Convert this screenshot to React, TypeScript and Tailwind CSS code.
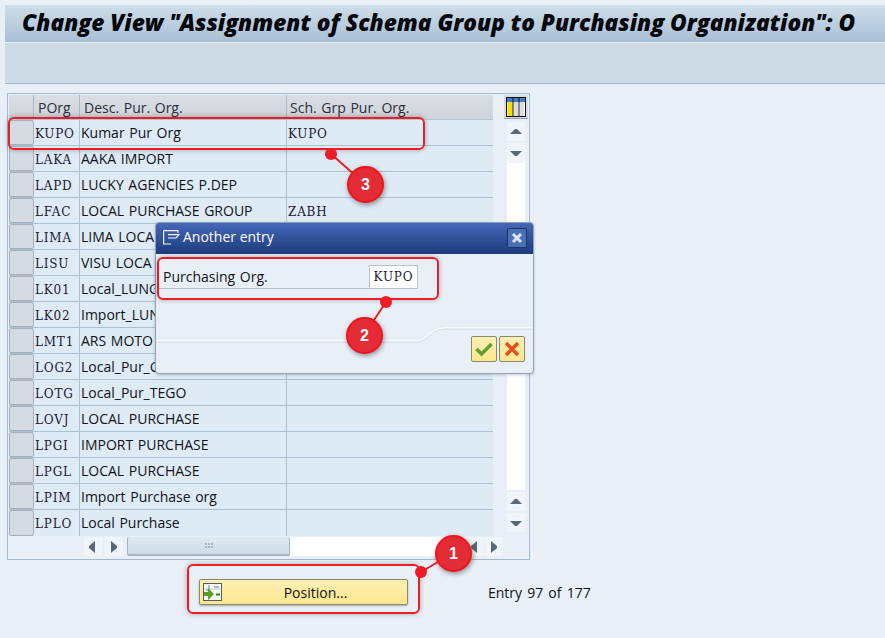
const rows = [
  ['KUPO', 'Kumar Pur Org', 'KUPO'],
  ['LAKA', 'AAKA IMPORT', ''],
  ['LAPD', 'LUCKY AGENCIES P.DEP', ''],
  ['LFAC', 'LOCAL PURCHASE GROUP', 'ZABH'],
  ['LIMA', 'LIMA LOCA', ''],
  ['LISU', 'VISU LOCA', ''],
  ['LK01', 'Local_LUNG', ''],
  ['LK02', 'Import_LUN', ''],
  ['LMT1', 'ARS MOTO', ''],
  ['LOG2', 'Local_Pur_G', ''],
  ['LOTG', 'Local_Pur_TEGO', ''],
  ['LOVJ', 'LOCAL PURCHASE', ''],
  ['LPGI', 'IMPORT PURCHASE', ''],
  ['LPGL', 'LOCAL PURCHASE', ''],
  ['LPIM', 'Import Purchase org', ''],
  ['LPLO', 'Local Purchase', ''],
];

const sans = 'font-["Open_Sans",sans-serif] text-[14px] [word-spacing:1px]';
const mono = 'font-["DejaVu_Serif",serif] text-[12px] tracking-[0.8px] text-[#1c1836]';

function ArrowBtn({ dir, className }: { dir: 'up' | 'down' | 'left' | 'right'; className: string }) {
  const pts = {
    up: '3,10 8,5 10,5 15,10',
    down: '3,6 15,6 10,11 8,11',
    left: '11,2 11,14 5,9 5,7',
    right: '6,2 6,14 12,9 12,7',
  }[dir];
  return (
    <div className={`flex items-center justify-center bg-[#f0f5fa] ${className}`}>
      <svg width="18" height="16" viewBox="0 0 18 16">
        <polygon points={pts} fill="#57687a" />
      </svg>
    </div>
  );
}

function Callout({ n, box, dot, circle }: {
  n: number;
  box: [number, number, number, number];
  dot: [number, number];
  circle: [number, number];
}) {
  return (
    <>
      <div
        className="absolute rounded-[6px] border-2 border-[#ee1c25] shadow-[0_0_5px_rgba(0,0,0,0.3)]"
        style={{ left: box[0], top: box[1], width: box[2], height: box[3] }}
      />
      <svg className="absolute left-0 top-0 pointer-events-none" width="885" height="638">
        <line x1={dot[0]} y1={dot[1]} x2={circle[0]} y2={circle[1]} stroke="#ee1c25" strokeWidth="2" />
        <circle cx={dot[0]} cy={dot[1]} r="6" fill="#ee1c25" />
      </svg>
      <div
        className="absolute flex items-center justify-center w-[37px] h-[37px] rounded-full bg-[#e32c36] border-2 border-[#f5121c] shadow-[1px_2px_5px_rgba(0,0,0,0.4)] text-white font-bold text-[16px] font-['Liberation_Sans',sans-serif]"
        style={{ left: circle[0] - 18, top: circle[1] - 18 }}
      >
        {n}
      </div>
    </>
  );
}

export default function App() {
  return (
    <div className="relative w-[885px] h-[638px] overflow-hidden bg-[#e8eff7] pl-[5px] pt-[5px] text-[#10131a]">
      {/* title + toolbar */}
      <div className="h-[38px] flex items-center pl-[17px] bg-gradient-to-b from-[#cfdde9] to-[#a8c0d5] border-b border-[#e8eff6] overflow-hidden whitespace-nowrap">
        <span className="font-['Open_Sans',sans-serif] font-extrabold italic text-[22.7px] text-[#05070c]">
          Change View "Assignment of Schema Group to Purchasing Organization": O
        </span>
      </div>
      <div className="h-[41px] bg-[#cddbe6] border-b border-[#a3b8ca]" />

      {/* table control */}
      <div className="mt-[9px] ml-[2px] w-[523px] h-[467px] border border-[#a4bacf] pl-[1px] pt-[1px] flex flex-col">
        <div className="flex h-[441px]">
          <div className="w-[484px] shrink-0">
            <div className={`flex h-[25px] bg-gradient-to-b from-[#d9dee3] to-[#cdd4da] border-b border-[#b7c4d0] text-[#2a3038] ${sans}`}>
              <div className="w-[25px] shrink-0 border-r border-[#a9b8c6]" />
              <div className="w-[46px] shrink-0 pl-[4px] pt-[2px] border-r border-[#a9b8c6]">POrg</div>
              <div className="w-[207px] shrink-0 pl-[4px] pt-[2px] border-r border-[#a9b8c6]">Desc. Pur. Org.</div>
              <div className="flex-1 pl-[3px] pt-[2px]">Sch. Grp Pur. Org.</div>
            </div>
            {rows.map(r => (
              <div key={r[0]} className="flex h-[26px] bg-[#deeaf4] border-b border-[#adc0d1] last:border-b-0">
                <div className="w-[25px] shrink-0 bg-[#d4dbe2] border border-[#a5b0ba] rounded-[2px]" />
                <div className={`w-[46px] shrink-0 pl-[1px] leading-[28px] border-r border-[#adc0d1] ${mono}`}>{r[0]}</div>
                <div className={`w-[207px] shrink-0 pl-[1px] leading-[25px] border-r border-[#adc0d1] ${sans}`}>{r[1]}</div>
                <div className={`flex-1 pl-[1px] leading-[28px] ${mono}`}>{r[2]}</div>
              </div>
            ))}
          </div>
          {/* vertical scrollbar */}
          <div className="ml-[11px] w-[24px] pb-[4px] flex flex-col items-center">
            <div className="w-[24px] h-[24px] flex items-center justify-center bg-[#d3dce4] border-b border-[#8fa0b0]">
              <svg width="20" height="20" viewBox="0 0 20 20">
                <rect x="0.5" y="0.5" width="19" height="19" fill="#fff" stroke="#111" />
                <rect x="1" y="1" width="18" height="4" fill="#3f7cc0" />
                <rect x="1.5" y="5" width="5" height="14" fill="#f5df00" />
                <rect x="8" y="5" width="4" height="14" fill="#d9dde0" />
                <rect x="14" y="5" width="4" height="14" fill="#d9dde0" />
                <path d="M7 1v18M13 1v18" stroke="#111" />
              </svg>
            </div>
            <ArrowBtn dir="up" className="mt-[3px] w-[18px] h-[19px]" />
            <ArrowBtn dir="down" className="mt-[2px] w-[18px] h-[19px]" />
            <div className="w-[18px] flex-1 mt-[1px] bg-white" />
            <ArrowBtn dir="up" className="mt-[2px] w-[18px] h-[19px]" />
            <ArrowBtn dir="down" className="mt-[2px] w-[18px] h-[19px]" />
          </div>
        </div>
        {/* horizontal scrollbar */}
        <div className="flex items-start h-[22px] pt-[1px] pl-[75px]">
          <ArrowBtn dir="left" className="w-[18px] h-[19px]" />
          <ArrowBtn dir="right" className="ml-[3px] w-[18px] h-[19px]" />
          <div className="ml-[4px] w-[163px] h-[19px] flex items-center justify-center rounded-[2px] bg-gradient-to-b from-[#dfe9f2] to-[#cfdde9] border-b-2 border-r border-l border-[#a9b4bf]">
            <div className="grid grid-cols-3 gap-[1px]">
              {[0, 1, 2, 3, 4, 5].map(i => <div key={i} className="w-[2px] h-[2px] bg-[#aab5c0]" />)}
            </div>
          </div>
          <div className="w-[176px] h-[19px] bg-white" />
          <ArrowBtn dir="left" className="w-[18px] h-[19px]" />
          <ArrowBtn dir="right" className="ml-[1px] w-[18px] h-[19px]" />
        </div>
      </div>

      {/* bottom: position button and entry count */}
      <div className="flex items-center ml-[194px] mt-[19px]">
        <div className="relative w-[209px] h-[26px] flex items-center justify-center pl-[24px] rounded-[2px] bg-gradient-to-b from-[#fdf0b4] to-[#fce68e] border border-[#8b8a6e] shadow-[0_1px_2px_rgba(0,0,0,0.3)] font-['Open_Sans',sans-serif] text-[14px]">
          <svg className="absolute left-[3px] top-[3px]" width="19" height="18" viewBox="0 0 19 18">
            <rect x="0.5" y="0.5" width="18" height="17" fill="#f4f6f4" stroke="#55605a" />
            <path d="M1 6h17" stroke="#ccd3d0" />
            <path d="M11 4h5" stroke="#b5bcc0" strokeWidth="2" />
            <path d="M6 2v5h-3" stroke="#b5bcc0" strokeWidth="2" fill="none" />
            <path d="M1 9h4V5l6 6-6 6v-4H1z" fill="#5d9c2c" />
            <path d="M13 11.5h4" stroke="#3f7d20" strokeWidth="2" />
          </svg>
          Position...
        </div>
        <span className="ml-[80px] font-['Open_Sans',sans-serif] text-[14px] [word-spacing:1.5px]">Entry 97 of 177</span>
      </div>

      {/* dialog */}
      <div className="absolute left-[155px] top-[222px] w-[379px] h-[152px] rounded-[4px] bg-[#e8eff6] border border-[#8ea3b8] overflow-hidden shadow-[0_1px_3px_rgba(0,0,0,0.2)]">
        <div className="relative h-[31px] flex items-center pl-[27px] pb-[4px] bg-gradient-to-b from-[#4568b8] to-[#1d3b7c] text-white font-['Open_Sans',sans-serif] text-[14px]">
          <svg className="absolute left-[7px] top-[7px]" width="17" height="15" viewBox="0 0 17 15" fill="none" stroke="#f2f5fa" strokeWidth="1.2">
            <path d="M.6 .6H15V3M.6 .6v13.4H8M5 4.6h11l-3 3.4H5" />
          </svg>
          Another entry
          <div className="absolute right-[6px] top-[5px] w-[20px] h-[20px] flex items-center justify-center rounded-[2px] bg-[#4b6fb5] border border-[#1b3468]">
            <svg width="12" height="12" viewBox="0 0 12 12">
              <path d="M2 2l8 8M10 2l-8 8" stroke="#d8e6f8" strokeWidth="3" />
            </svg>
          </div>
        </div>
        <div className="relative h-[120px]">
          <div className={`absolute left-[1px] top-[12px] w-[213px] h-[23px] pl-[6px] border-b border-[#b4bec8] ${sans}`}>Purchasing Org.</div>
          <div className={`absolute left-[213px] top-[11px] w-[49px] h-[24px] flex items-center justify-center bg-white border border-[#b8c2cc] ${mono}`}>KUPO</div>
          <svg className="absolute left-0 top-[60px]" width="379" height="30" fill="none">
            <path d="M0 27H262c8 0 14-13 26-13H379" stroke="#fff" strokeWidth="1.5" />
            <path d="M0 28H262c8 0 14-13 26-13H379" stroke="#bcc8d3" strokeWidth="0.6" />
          </svg>
          <div className="absolute left-[315px] top-[82px] w-[26px] h-[26px] flex items-center justify-center rounded-[2px] bg-gradient-to-b from-[#fdf0b4] to-[#fce68e] border border-[#8b8a6e]">
            <svg width="18" height="16" viewBox="0 0 18 16">
              <path d="M1.5 8l5 5 10-10" stroke="#5f9f2e" strokeWidth="3.5" fill="none" />
            </svg>
          </div>
          <div className="absolute left-[343px] top-[82px] w-[26px] h-[26px] flex items-center justify-center rounded-[2px] bg-gradient-to-b from-[#fdf0b4] to-[#fce68e] border border-[#8b8a6e]">
            <svg width="16" height="16" viewBox="0 0 16 16">
              <path d="M2 2l12 12M14 2L2 14" stroke="#e2531e" strokeWidth="3.5" />
            </svg>
          </div>
        </div>
      </div>

      {/* annotations */}
      <Callout n={3} box={[8, 117, 417, 33]} dot={[331, 154]} circle={[365, 184]} />
      <Callout n={2} box={[157, 257, 282, 43]} dot={[386, 302]} circle={[364, 335]} />
      <Callout n={1} box={[187, 564, 233, 50]} dot={[421, 572]} circle={[453, 553]} />
    </div>
  );
}
